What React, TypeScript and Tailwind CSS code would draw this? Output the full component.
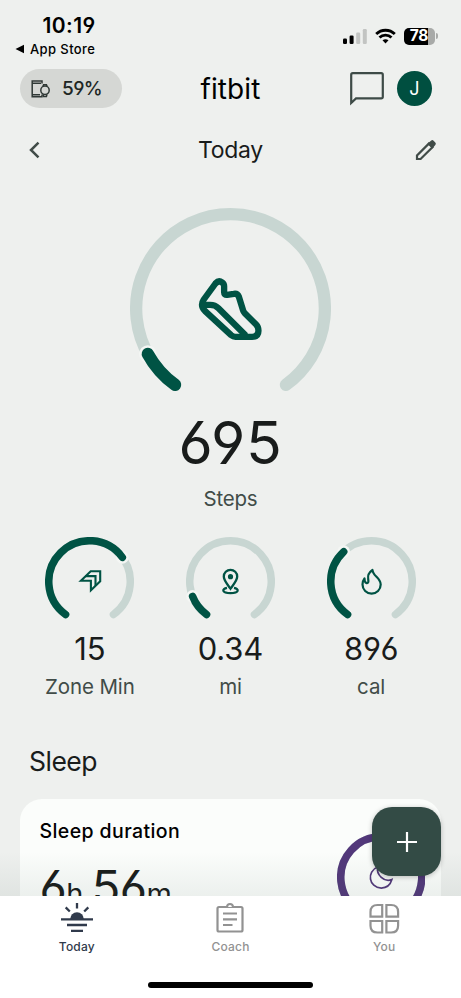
import type { ReactNode } from "react";

const FONT = "font-[Inter,'Open_Sans',sans-serif] [font-feature-settings:'cv03','cv04']";
const GREEN = "#005344";

// Angles run clockwise in degrees, starting from straight down.
function point(r: number, angle: number) {
  const rad = (angle * Math.PI) / 180;
  return { x: -r * Math.sin(rad), y: r * Math.cos(rad) };
}

function arc(r: number, from: number, to: number) {
  const a = point(r, from);
  const b = point(r, to);
  return `M${a.x} ${a.y}A${r} ${r} 0 ${to - from > 180 ? 1 : 0} 1 ${b.x} ${b.y}`;
}

type RingProps = {
  size: number;
  stroke: number;
  sweep: number;
  color?: string;
  children: ReactNode;
};

function Ring({ size, stroke, sweep, color = GREEN, children }: RingProps) {
  const r = (size - stroke) / 2;
  const end = point(r, 36 + sweep);
  return (
    <svg width={size} height={size} viewBox={`${-size / 2} ${-size / 2} ${size} ${size}`} fill="none" className="block shrink-0">
      <path d={arc(r, 36, 324)} stroke="#c8d6d2" strokeWidth={stroke} strokeLinecap="round" />
      {sweep < 288 ? <circle cx={end.x} cy={end.y} r={stroke / 2 + 2.6} fill="#f4f6f4" /> : null}
      <path d={arc(r, 36, 36 + sweep)} stroke={color} strokeWidth={stroke} strokeLinecap="round" />
      {children}
    </svg>
  );
}

function ShoeIcon() {
  return (
    <g transform="translate(-40.7 -43) scale(.3333)" stroke={GREEN} strokeWidth="19" strokeLinejoin="round">
      <path d="M77 54Q87 43 97 51Q103 55 103 62V80Q103 89 112 88L132 85Q143 83 147 93L160 135Q161 139 165 143L199 177Q206 184 206 196Q206 214 187 214H137Q130 214 124 209L46 137Q30 120 42 102Z" />
      <path d="M39 118H61Q76 118 86 128L168 210" />
    </g>
  );
}

function ZoneIcon() {
  return (
    <g stroke={GREEN} strokeWidth="2.1" strokeLinejoin="miter">
      <path d="M-8.6 -.8L1.2 -10.2H10.7V-.2L1.4 8.7V-.8Z" />
      <path d="M-4.2 -5.4H6V4.2" />
    </g>
  );
}

function PinIcon() {
  return (
    <g stroke={GREEN} strokeWidth="2.3">
      <path d="M0 7.2C-3.5 2.2 -6.7 -1 -6.7 -5A6.7 6.7 0 0 1 6.7 -5C6.7 -1 3.5 2.2 0 7.2Z" />
      <circle cx="0" cy="-4.8" r="2.6" fill={GREEN} stroke="none" />
      <path d="M-3.5 6.4C-9 7.4 -8.8 11.6 0 11.6S9 7.4 3.5 6.4" />
    </g>
  );
}

function FlameIcon() {
  return (
    <path
      d="M1 -11.5C1.2 -5.3 9.2 -3.8 9.2 3A9.1 9.1 0 0 1 -9 3C-9 .8 -8.2 -1.4 -7 -3C-7.2 2 -3.2 3.1 -3.1 -.2C-3.1 -3 -5.4 -7.3 1 -11.5Z"
      stroke={GREEN}
      strokeWidth="2.2"
      strokeLinejoin="round"
    />
  );
}

function StatusBar() {
  return (
    <div className="flex h-[62px] justify-between pr-[23px] pl-[15px]">
      <div className="pt-[13px]">
        <div className="pl-[27.5px] text-[21px] leading-[25px] font-semibold tracking-[0.4px]">10:19</div>
        <div className="mt-[3px] flex items-center gap-[5px] text-[13px] leading-4 font-medium tracking-[0.4px] whitespace-nowrap">
          <svg width="10" height="10" viewBox="0 0 10 10">
            <path d="M.5 5L9 .7V9.3Z" fill="#000" />
          </svg>
          App Store
        </div>
      </div>
      <div className="mt-[27px] flex h-[18px] items-center gap-2">
        <svg width="24" height="16" viewBox="0 0 24 16">
          <rect x="0" y="10.5" width="4" height="5.5" rx="1.2" />
          <rect x="6.6" y="7.5" width="4" height="8.5" rx="1.2" />
          <rect x="13.2" y="4.5" width="4" height="11.5" rx="1.2" fill="#c2c4c2" />
          <rect x="19.8" y="1" width="4" height="15" rx="1.2" fill="#c2c4c2" />
        </svg>
        <svg width="21" height="16" viewBox="0 0 21 16" fill="none" stroke="#000" strokeWidth="2.8">
          <path d="M1.2 6.1A13.2 13.2 0 0 1 19.8 6.1" />
          <path d="M4.5 9.6A8.5 8.5 0 0 1 16.5 9.6" />
          <path d="M10.5 15.5L7.5 12.3Q10.5 10 13.5 12.3Z" fill="#000" stroke="none" />
        </svg>
        <div className="flex items-center gap-px">
          <div className="flex h-[17px] w-[31px] items-center justify-center overflow-hidden rounded-[5px] bg-[linear-gradient(90deg,#000_79%,#a8aaa8_79%)] pr-px text-[15.5px] leading-none font-bold tracking-[-0.3px] text-white">
            78
          </div>
          <div className="h-[6px] w-[2px] rounded-r-full bg-[#a8aaa8]" />
        </div>
      </div>
    </div>
  );
}

function Header() {
  return (
    <header className="grid h-[53px] grid-cols-[1fr_auto_1fr] items-center px-[29px]">
      <div className="-ml-[9px] flex h-[39px] w-[102px] items-center gap-[11px] rounded-full bg-[#d5d7d4] pl-[11px]">
        <svg width="20" height="18" viewBox="0 0 20 18" fill="none" stroke="#303936" strokeWidth="1.5" className="shrink-0">
          <path d="M11 3.5V1H1.2V16.8H11V14.5M1 3.3H10M1 14.8H9" />
          <circle cx="14" cy="10.3" r="4.2" />
          <path d="M12 6.3L12.6 4.7H15.4L16 6.3M12 14.3L12.6 16.5H15.4L16 14.3" />
        </svg>
        <span className="pt-px text-[19px] font-medium tracking-[-0.6px] text-[#202624]">59%</span>
      </div>
      <div className="text-[28px] leading-8 tracking-[0.1px]">fitbit</div>
      <div className="flex items-center justify-end gap-[13px]">
        <svg width="34" height="34" viewBox="0 0 34 34" fill="none" stroke="#3e4b47" strokeWidth="2.2">
          <path d="M1.2 31V2.8Q1.2 1.2 2.8 1.2H31.2Q32.8 1.2 32.8 2.8V24.8Q32.8 26.4 31.2 26.4H6Z" />
        </svg>
        <div className="flex size-[35px] items-center justify-center rounded-full bg-[#004f40] text-[18px] text-white">J</div>
      </div>
    </header>
  );
}

function DateBar() {
  return (
    <div className="flex h-[70px] items-center justify-between pr-[24px] pl-[29px]">
      <svg width="12" height="18" viewBox="0 0 12 18" fill="none" stroke="#414c48" strokeWidth="2.5">
        <path d="M9.5 1.6L2 9L9.5 16.4" />
      </svg>
      <h1 className="pl-[5px] text-[23px] tracking-[-0.3px]">Today</h1>
      <svg width="22" height="22" viewBox="0 0 22 22" fill="none">
        <path d="M2 20V16.4L13.8 4.6L17.4 8.2L5.6 20Z" stroke="#414c48" strokeWidth="2.2" />
        <path d="M12.6 4.6L16 1.7Q17.3 .5 18.6 1.7L20.3 3.4Q21.5 4.7 20.3 6L17.4 9.4Z" fill="#414c48" />
      </svg>
    </div>
  );
}

const metrics = [
  { value: "15", label: "Zone Min", sweep: 197.7, icon: <ZoneIcon /> },
  { value: "0.34", label: "mi", sweep: 32.5, icon: <PinIcon /> },
  { value: "896", label: "cal", sweep: 101, icon: <FlameIcon /> }
];

function SleepCard() {
  return (
    <div className="mx-5 flex h-[180px] justify-between rounded-t-[22px] bg-[#fbfdfb] pr-4 pl-[19.5px]">
      <div className="pt-[20px]">
        <h3 className="text-[19.5px] leading-6 font-medium tracking-[0.4px] whitespace-nowrap text-black">Sleep duration</h3>
        <div className="mt-[15px] flex items-baseline leading-[57px] tracking-[-0.6px]">
          <span className="text-[47px]">6</span>
          <span className="text-[29px]">h</span>
          <span className="ml-[9px] text-[47px]">56</span>
          <span className="text-[29px]">m</span>
        </div>
      </div>
      <div className="pt-[34px]">
        <Ring size={88.5} stroke={7.5} sweep={288} color="#52387a">
          <path d="M-3.5 -10.2C-15 -6 -12.5 10.5 0 10.8C5.5 10.7 9.3 7 10.6 2.3C3 5.5 -5.3 -2.5 -3.5 -10.2Z" stroke="#52387a" strokeWidth="1.7" />
        </Ring>
      </div>
    </div>
  );
}

function TodayIcon() {
  return (
    <svg width="32" height="32" viewBox="0 0 32 32" fill="none" stroke="#303a4b" strokeWidth="2.3">
      <path d="M0 17.3H32M6 23H26M10 28.8H22M16 1V6.5M4.7 5.4L8.8 9.5M27.3 5.4L23.2 9.5" />
      <path d="M9.2 17A6.8 6.8 0 0 1 22.8 17Z" fill="#303a4b" stroke="none" />
    </svg>
  );
}

function CoachIcon() {
  return (
    <svg width="32" height="32" viewBox="0 0 32 32" fill="none" stroke="#929292" strokeWidth="2.2">
      <rect x="3.5" y="5" width="25" height="24.5" rx="1.5" />
      <path d="M9 11.5H23M9 17.3H23M9 23H18.5" />
      <path d="M11.5 5H13Q13.2 2 16 2T19 5H20.5" fill="#fff" />
    </svg>
  );
}

function YouIcon() {
  return (
    <svg width="32" height="32" viewBox="0 0 32 32" fill="none" stroke="#929292" strokeWidth="2.2">
      <path d="M14.2 14.7H2.5V10Q2.5 3 9.5 3H14.2ZM18.4 14.7H30.1V10Q30.1 3 23.1 3H18.4ZM14.2 19H2.5V23.7Q2.5 30.5 9.5 30.5H14.2ZM18.4 19H30.1V23.7Q30.1 30.5 23.1 30.5H18.4Z" />
    </svg>
  );
}

const tabs = [
  { label: "Today", icon: <TodayIcon />, className: "text-[#303a4b]" },
  { label: "Coach", icon: <CoachIcon />, className: "text-[#929292]" },
  { label: "You", icon: <YouIcon />, className: "text-[#929292]" }
];

function TabBar() {
  return (
    <nav className="h-[102px] shrink-0 bg-white pt-[6px]">
      <div className="grid grid-cols-3">
        {tabs.map((tab) => (
          <div key={tab.label} className={`flex flex-col items-center ${tab.className}`}>
            {tab.icon}
            <span className="mt-[5px] text-[12px] leading-4 font-medium tracking-[0.2px]">{tab.label}</span>
          </div>
        ))}
      </div>
      <div className="mx-auto mt-[27px] h-[6px] w-[165px] rounded-full bg-black" />
    </nav>
  );
}

export default function App() {
  return (
    <div className={`relative flex h-[998px] w-[461px] flex-col overflow-hidden bg-[#eef0ee] text-[#191c1b] ${FONT}`}>
      <main className="min-h-0 flex-1 overflow-hidden">
        <div className="text-black">
          <StatusBar />
          <Header />
        </div>
        <DateBar />

        <section className="flex flex-col items-center pt-[22.5px]">
          <Ring size={201} stroke={12.3} sweep={25.2}>
            <ShoeIcon />
          </Ring>
          <div className="mt-[-2px] text-[59px] leading-[72px] tracking-[0.6px]">695</div>
          <div className="mt-[6px] text-[20.5px] leading-7 tracking-[-0.2px] text-[#414c48]">Steps</div>
        </section>

        <section className="mt-[24.5px] grid grid-cols-3 px-[19.5px]">
          {metrics.map((metric) => (
            <div key={metric.label} className="flex flex-col items-center">
              <Ring size={89} stroke={7.5} sweep={metric.sweep}>
                {metric.icon}
              </Ring>
              <div className="mt-[4px] text-[31px] leading-[38px] tracking-[-0.1px]">{metric.value}</div>
              <div className="mt-[5px] text-[20.5px] leading-7 tracking-[-0.1px] whitespace-nowrap text-[#414c48]">{metric.label}</div>
            </div>
          ))}
        </section>

        <h2 className="mt-[42.5px] mb-[21px] pl-[29px] text-[26.5px] leading-[34px] tracking-[-0.5px]">Sleep</h2>
        <SleepCard />
      </main>

      {/* scrim that fades the scrolled content out above the tab bar */}
      <div className="absolute bottom-[102px] left-0 h-[44px] w-full bg-linear-to-b from-transparent to-[#3c5a50]/8" />
      <button className="absolute top-[807px] left-[372px] flex size-[69px] items-center justify-center rounded-[20px] bg-[#334b45] shadow-[0_1px_5px_rgba(0,0,0,0.25)]">
        <svg width="20" height="20" viewBox="0 0 20 20" stroke="#fff" strokeWidth="2.2">
          <path d="M10 0V20M0 10H20" />
        </svg>
      </button>
      <TabBar />
    </div>
  );
}
